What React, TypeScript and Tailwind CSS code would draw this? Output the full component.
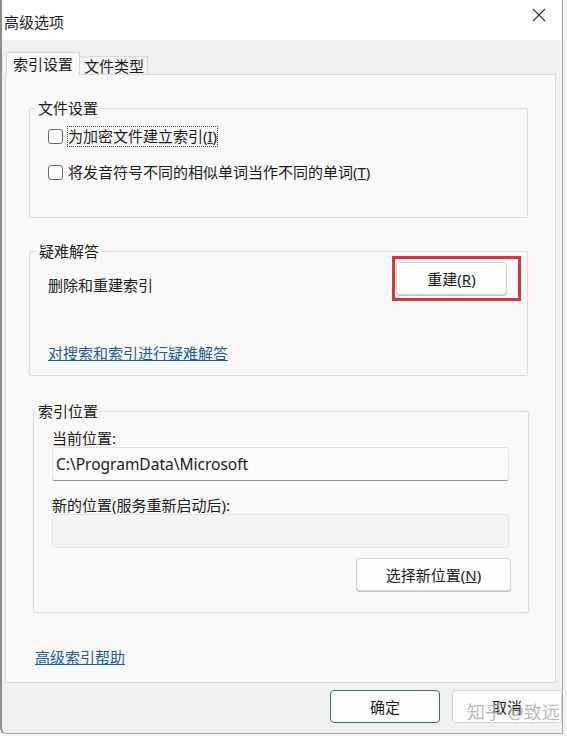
import React from 'react';

const FONT = "font-['Noto_Sans','Noto_Sans_CJK_SC',sans-serif]";

function Checkbox() {
  return <span className="h-[15px] w-[15px] shrink-0 rounded-[3px] border border-[#6b6b6b] bg-white" />;
}

function WinButton({ children, className = '' }: { children: React.ReactNode; className?: string }) {
  return (
    <button
      className={`flex h-[33px] items-center justify-center rounded-[4px] border border-[#d3d3d3] bg-[#fdfdfd] text-[15px] leading-[20px] text-[#1b1b1b] shadow-[0_1px_0_#c4c4c4] ${className}`}
    >
      {children}
    </button>
  );
}

function Group({ title, legendClass, className, children }: { title: string; legendClass: string; className: string; children: React.ReactNode }) {
  return (
    <fieldset className={`rounded-[2px] border border-[#dcdcdc] p-0 ${className}`}>
      <legend className={`px-[2px] text-[15px] leading-[20px] text-[#1b1b1b] ${legendClass}`}>{title}</legend>
      {children}
    </fieldset>
  );
}

export default function App() {
  return (
    <div className={`relative h-[736px] w-[567px] overflow-hidden bg-[#f3f3f3] ${FONT}`}>
      {/* window */}
      <div className="flex h-[734px] w-[563px] flex-col rounded-bl-[6px] border-r border-b border-l-2 border-[#a9a9a9] border-l-[#8c8c8c] bg-[#f0f0f0]">
        {/* title bar */}
        <div className="flex h-[40px] shrink-0 items-center justify-between bg-white pl-[2px] pr-[16px]">
          <span className="mt-[4px] text-[15px] leading-[20px] text-[#1b1b1b]">高级选项</span>
          <svg width="14" height="14" viewBox="0 0 14 14" aria-hidden="true" className="mb-[10px]">
            <path d="M1 1L13 13M13 1L1 13" stroke="#333" strokeWidth="1.1" fill="none" />
          </svg>
        </div>

        {/* tabs */}
        <div className="flex items-end pl-[4px] pt-[12px]">
          <div className="relative z-10 -mb-px flex h-[23px] items-center border border-b-0 border-[#d6d6d6] bg-[#f9f9f9] px-[6px] text-[15px] leading-[20px] text-[#1b1b1b]">
            索引设置
          </div>
          <div className="flex h-[18px] items-center border border-b-0 border-l-0 border-[#d9d9d9] bg-[#f3f3f3] pl-[4px] pr-[3px] text-[15px] leading-[20px] text-[#1b1b1b]">
            文件类型
          </div>
        </div>

        {/* tab panel */}
        <div className="ml-[3px] mr-[6px] flex flex-col border border-[#d9d9d9] bg-[#f9f9f9]">
          <Group title="文件设置" legendClass="ml-[6px]" className="ml-[23px] mr-[27px] mt-[23px]">
            <div className="flex flex-col gap-[14px] pb-[34px] pl-[18px] pt-[7px] text-[15px] text-[#1b1b1b]">
              <div className="flex h-[22px] items-center">
                <Checkbox />
                <span className="ml-[4px] border border-dotted border-[#444] leading-[19px]">
                  为加密文件建立索引(<span className="underline">I</span>)
                </span>
              </div>
              <div className="flex h-[22px] items-center">
                <Checkbox />
                <span className="ml-[4px] border border-transparent leading-[19px]">
                  将发音符号不同的相似单词当作不同的单词(<span className="underline">T</span>)
                </span>
              </div>
            </div>
          </Group>

          <Group title="疑难解答" legendClass="ml-[7px]" className="ml-[23px] mr-[27px] mt-[23px]">
            <div className="flex flex-col pb-[12px] pl-[18px] pr-[20px] pt-[1px] text-[15px] text-[#1b1b1b]">
              <div className="flex items-start justify-between">
                <span className="mt-[13px] leading-[20px]">删除和重建索引</span>
                <div className="relative">
                  <WinButton className="w-[111px]">
                    重建(<span className="underline">R</span>)
                  </WinButton>
                  <div className="absolute -bottom-[6px] -left-[4px] -right-[14px] -top-[6px] border-[3px] border-[#d6363f]" />
                </div>
              </div>
              <a className="mt-[48px] self-start leading-[20px] text-[#1e5c96] underline">对搜索和索引进行疑难解答</a>
            </div>
          </Group>

          <Group title="索引位置" legendClass="ml-[2px]" className="ml-[27px] mr-[26px] mt-[25px]">
            <div className="flex flex-col pb-[21px] pl-[18px] pr-[19px] pt-[8px] text-[15px] text-[#1b1b1b]">
              <span className="leading-[18px]">当前位置:</span>
              <div className="flex h-[34px] items-center rounded-[3px] border border-[#e2e2e2] border-b-[#8f8f8f] bg-[#fbfbfb] pl-[3px] text-[15.5px] leading-[20px]">
                C:\ProgramData\Microsoft
              </div>
              <span className="mt-[15px] leading-[18px]">新的位置(服务重新启动后):</span>
              <div className="h-[34px] rounded-[3px] border border-[#e6e6e6] bg-[#f5f5f5]" />
              <WinButton className="mr-[-2px] mt-[10px] w-[155px] self-end">
                选择新位置(<span className="underline">N</span>)
              </WinButton>
            </div>
          </Group>

          <a className="ml-[29px] mt-[34px] mb-[15px] self-start text-[15px] leading-[20px] text-[#1e5c96] underline">高级索引帮助</a>
        </div>

        {/* dialog buttons */}
        <div className="mt-[7px] flex justify-end gap-[12px]">
          <button className="flex h-[33px] w-[110px] items-center justify-center rounded-[4px] border-[1.5px] border-[#3f6878] bg-[#fdfdfd] text-[15px] leading-[20px] text-[#1b1b1b]">
            确定
          </button>
          <button className="flex h-[33px] w-[110px] items-center justify-center rounded-[4px] border border-[#d3d3d3] bg-[#fdfdfd] text-[15px] leading-[20px] text-[#1b1b1b]">
            取消
          </button>
        </div>
      </div>

      {/* watermark */}
      <span className="pointer-events-none absolute left-[467px] top-[700px] text-[18px] leading-[24px] text-[#a8a8a8]/80">
        知乎 @致远
      </span>
    </div>
  );
}
